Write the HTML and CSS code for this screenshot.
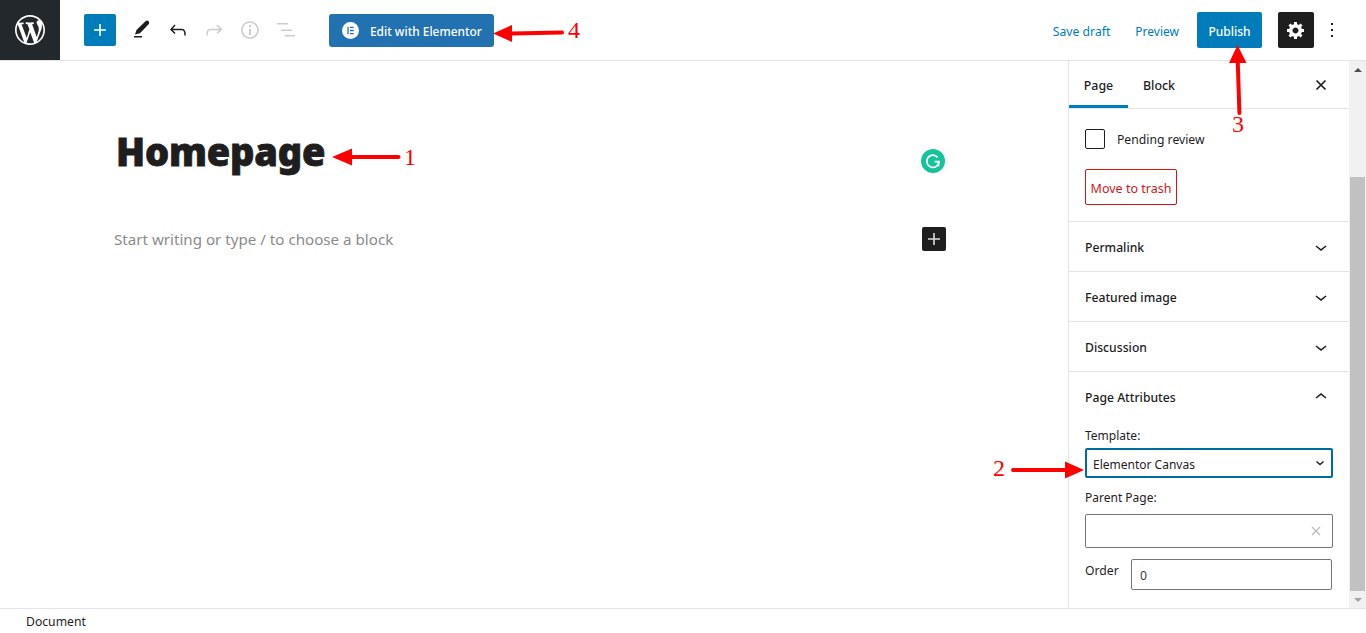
FILE: index.html
```html
<!DOCTYPE html>
<html lang="en">
<head>
<meta charset="utf-8">
<title>Edit Page</title>
<link rel="stylesheet" href="styles.css">
</head>
<body>
<div class="app">
  <header class="topbar">
    <div class="logo">
      <svg width="30" height="30" viewBox="0 0 20 20"><path fill="#fff" d="M20 10c0-5.51-4.49-10-10-10C4.48 0 0 4.49 0 10c0 5.52 4.48 10 10 10 5.51 0 10-4.48 10-10zM7.78 15.37L4.37 6.22c.55-.02 1.17-.08 1.17-.08.5-.06.44-1.13-.06-1.11 0 0-1.45.11-2.37.11-.18 0-.37 0-.58-.01C4.12 2.69 6.87 1.11 10 1.11c2.33 0 4.45.87 6.05 2.34-.68-.11-1.65.39-1.65 1.58 0 .74.45 1.36.9 2.1.35.61.55 1.36.55 2.46 0 1.49-1.4 5-1.4 5l-3.03-8.37c.54-.02.82-.17.82-.17.5-.05.44-1.25-.06-1.22 0 0-1.44.12-2.38.12-.87 0-2.33-.12-2.33-.12-.5-.03-.56 1.2-.06 1.22l.92.08 1.26 3.41zM17.41 10c.24-.64.74-1.87.43-4.25.7 1.29 1.05 2.71 1.05 4.25 0 3.29-1.73 6.24-4.4 7.78.97-2.59 1.94-5.2 2.92-7.78zM6.1 18.09C3.12 16.65 1.11 13.53 1.11 10c0-1.3.23-2.48.72-3.59C3.25 10.3 4.67 14.2 6.1 18.09zm4.03-6.63l2.58 6.98c-.86.29-1.76.45-2.71.45-.79 0-1.57-.11-2.29-.33.81-2.38 1.62-4.74 2.42-7.1z"/></svg>
    </div>
    <div class="tools">
      <div class="add-btn"><svg width="24" height="24" viewBox="0 0 24 24"><path fill="#fff" d="M18 11.2h-5.2V6h-1.6v5.2H6v1.6h5.2V18h1.6v-5.2H18z"/></svg></div>
      <div class="icon-btn"><svg width="24" height="24" viewBox="0 0 24 24"><path fill="#1e1e1e" d="M4 18h8v1.500H4zM5 16.500l1.500-4.500 9-8.800c.9-.9 2.300-.9 3.100 0 .8.900.8 2.200 0 3L10 15.200z"/></svg></div>
      <div class="icon-btn"><svg width="24" height="24" viewBox="0 0 24 24"><path fill="#1e1e1e" d="M18.3 11.7c-.6-.6-1.4-.9-2.3-.9H6.7l2.9-3.3-1.1-1-4.5 5L8.500 16l1-1-2.700-2.700H16c.5 0 .9.2 1.300.5 1 1 1 3.400 1 4.500v.3h1.500v-.2c0-1.500 0-4.300-1.500-5.700z"/></svg></div>
      <div class="icon-btn"><svg width="24" height="24" viewBox="0 0 24 24"><path fill="#ccc" d="M15.6 6.500l-1.100 1 2.900 3.300H8c-.9 0-1.700.3-2.300.9-1.400 1.500-1.400 4.200-1.400 5.600v.2h1.500v-.3c0-1.100 0-3.500 1-4.500.3-.3.7-.5 1.300-.5h9.200L14.500 15l1.100 1.100 4.600-4.600-4.600-5z"/></svg></div>
      <div class="icon-btn"><svg width="24" height="24" viewBox="0 0 24 24"><path fill="#ccc" d="M12 3.200c-4.800 0-8.800 3.900-8.800 8.800 0 4.800 3.900 8.800 8.800 8.800 4.800 0 8.800-3.900 8.800-8.800 0-4.800-4-8.800-8.800-8.800zm0 16c-4 0-7.200-3.300-7.200-7.200C4.800 8 8 4.800 12 4.800s7.200 3.300 7.200 7.200c0 4-3.200 7.200-7.200 7.200zM11 17h2v-6h-2v6zm0-8h2V7h-2v2z"/></svg></div>
      <div class="icon-btn"><svg width="24" height="24" viewBox="0 0 24 24"><path fill="#ccc" d="M3 5h11v1.500H3zM7 11.500h11V13H7zM11 17h10v1.500H11z"/></svg></div>
    </div>
    <div class="elementor-btn">
      <svg width="17" height="17" viewBox="0 0 17 17"><circle cx="8.500" cy="8.500" r="8.500" fill="#fff"/><path fill="#2271b1" d="M5.400 4.800h1.300v7.400H5.400zM8 4.800h3.700v1.300H8zM8 7.850h3.700v1.300H8zM8 10.900h3.700v1.300H8z"/></svg>
      <span>Edit with Elementor</span>
    </div>
    <div class="actions">
      <span class="link-btn save">Save draft</span>
      <span class="link-btn">Preview</span>
      <span class="publish">Publish</span>
      <div class="gear"><svg width="20" height="20" viewBox="0 0 20 20"><path fill="#fff" d="M18 12h-2.180c-.17.7-.44 1.350-.81 1.930l1.540 1.540-2.100 2.100-1.540-1.540c-.58.36-1.230.63-1.910.79V19H8v-2.180c-.68-.16-1.330-.43-1.910-.79l-1.540 1.540-2.120-2.120 1.540-1.540c-.36-.58-.63-1.230-.79-1.910H1V9.030h2.170c.16-.7.44-1.350.8-1.940L2.430 5.550l2.100-2.100 1.540 1.540c.58-.37 1.240-.64 1.930-.81V2h3v2.180c.68.16 1.330.43 1.910.79l1.540-1.540 2.120 2.120-1.540 1.540c.36.59.64 1.240.8 1.940H18V12zm-8.500 1.500c1.660 0 3-1.340 3-3s-1.340-3-3-3-3 1.340-3 3 1.340 3 3 3z"/></svg></div>
      <div class="more"><svg width="24" height="24" viewBox="0 0 24 24"><path fill="#1e1e1e" d="M13 19h-2v-2h2v2zm0-6h-2v-2h2v2zm0-6h-2V5h2v2z"/></svg></div>
    </div>
  </header>

  <div class="workspace">
    <main class="editor">
      <div class="title-row">
        <h1 class="title">Homepage</h1>
        <div class="grammarly"><svg width="24" height="24" viewBox="0 0 24 24"><circle cx="12" cy="12" r="12" fill="#15c39a"/><path fill="none" stroke="#fff" stroke-width="1.700" d="M16.600 8.400A6.100 6.100 0 1 0 18 12.600h-4.400"/><path fill="none" stroke="#fff" stroke-width="1.500" d="M17.500 13v4.500"/></svg></div>
      </div>
      <div class="block-row">
        <span class="placeholder">Start writing or type / to choose a block</span>
        <div class="block-add"><svg width="24" height="24" viewBox="0 0 24 24"><path fill="#ddd" d="M18 11.200h-5.200V6h-1.600v5.200H6v1.600h5.200V18h1.600v-5.200H18z"/></svg></div>
      </div>
    </main>

    <aside class="sidebar">
      <div class="tabs">
        <span class="tab active">Page</span>
        <span class="tab">Block</span>
        <svg class="close" width="24" height="24" viewBox="0 0 24 24"><path fill="none" stroke="#1e1e1e" stroke-width="1.700" d="M7.500 7.500l9 9M16.500 7.500l-9 9"/></svg>
      </div>
      <section class="status">
        <label class="check"><span class="box"></span><span>Pending review</span></label>
        <span class="trash">Move to trash</span>
      </section>
      <section class="panel"><span>Permalink</span><svg width="24" height="24" viewBox="0 0 24 24"><path fill="#1e1e1e" d="M17.500 11.600L12 16l-5.500-4.400.9-1.200L12 14l4.500-3.600 1 1.200z"/></svg></section>
      <section class="panel"><span>Featured image</span><svg width="24" height="24" viewBox="0 0 24 24"><path fill="#1e1e1e" d="M17.500 11.600L12 16l-5.500-4.400.9-1.200L12 14l4.500-3.600 1 1.200z"/></svg></section>
      <section class="panel"><span>Discussion</span><svg width="24" height="24" viewBox="0 0 24 24"><path fill="#1e1e1e" d="M17.500 11.600L12 16l-5.500-4.400.9-1.200L12 14l4.500-3.600 1 1.200z"/></svg></section>
      <section class="attrs">
        <div class="attrs-head"><span>Page Attributes</span><svg width="24" height="24" viewBox="0 0 24 24"><path fill="#1e1e1e" d="M6.500 12.400L12 8l5.500 4.400-.9 1.200L12 10l-4.500 3.600-1-1.200z"/></svg></div>
        <div class="field-label">Template:</div>
        <div class="select"><span>Elementor Canvas</span><svg width="12" height="12" viewBox="0 0 12 12"><path fill="none" stroke="#1e1e1e" stroke-width="1.500" d="M2.500 4.500L6 7.500l3.500-3"/></svg></div>
        <div class="field-label parent-label">Parent Page:</div>
        <div class="combo"><svg width="12" height="12" viewBox="0 0 12 12"><path fill="none" stroke="#bbb" stroke-width="1.300" d="M2 2l8 8M10 2l-8 8"/></svg></div>
        <div class="order-row"><span>Order</span><div class="order-input">0</div></div>
      </section>
    </aside>

    <div class="scrollbar">
      <div class="sb-arrow up"></div>
      <div class="sb-space"></div>
      <div class="sb-thumb"></div>
      <div class="sb-arrow down"></div>
    </div>
  </div>

  <footer class="footer">Document</footer>
</div>

<svg class="annotations" width="1366" height="633" viewBox="0 0 1366 633">
  <g fill="#f00" stroke="none">
    <path d="M332 157l20-8.500v6.500h46.500a2 2 0 0 1 0 4H352v6.500z"/>
    <path d="M1084 470l-19 8.500v-6.500h-52a2 2 0 0 1 0-4h52v-6.500z"/>
    <path d="M1237.500 45l-8.500 18h6.800l1.600 50a2 2 0 0 0 4 0l-1.600-50h6.700z"/>
    <path d="M493 33.500l19-8.500v6.500l50-1a2 2 0 0 1 0 4l-50 1v6.500z"/>
  </g>
  <g class="anno-num" fill="#f00">
    <text x="404" y="165">1</text>
    <text x="993" y="476">2</text>
    <text x="1232" y="132">3</text>
    <text x="568" y="38">4</text>
  </g>
</svg>
</body>
</html>
```

FILE: styles.css
```css
* { box-sizing: border-box; }
html, body { margin: 0; height: 100%; overflow: hidden; background: #fff; }
body { font-family: "Noto Sans", "Open Sans", sans-serif; font-size: 12.200px; color: #1e1e1e; position: relative; }
svg { display: block; flex: none; }

.app { display: flex; flex-direction: column; height: 633px; }

/* Top bar */
.topbar { height: 61px; flex: none; display: flex; align-items: center; border-bottom: 1px solid #e2e4e7; }
.logo { width: 60px; height: 60px; background: #23282d; display: flex; align-items: center; justify-content: center; }
.tools { display: flex; align-items: center; margin-left: 24px; }
.add-btn { width: 32px; height: 32px; background: #007cba; border-radius: 2px; display: flex; align-items: center; justify-content: center; margin-right: 8px; }
.icon-btn { width: 36px; height: 36px; display: flex; align-items: center; justify-content: center; }
.elementor-btn { margin-left: 25px; width: 165px; height: 33px; background: #2271b1; border-radius: 3px; color: #fff; font-weight: 500; display: flex; align-items: center; padding-left: 13px; gap: 11px; font-size: 11.900px; margin-top: 1px; }
.elementor-btn span { padding-top: 1px; }
.actions { margin-left: auto; display: flex; align-items: center; padding-right: 16px; }
.link-btn { color: #007cba; font-size: 12px; padding-top: 2px; margin-right: 18px; }
.link-btn.save { font-size: 12.200px; margin-right: 25px; }
.publish { width: 65px; height: 36px; background: #007cba; color: #fff; border-radius: 2px; font-weight: 500; font-size: 12px; display: flex; align-items: center; justify-content: center; padding-top: 2px; }
.gear { width: 36px; height: 36px; margin-left: 16px; background: #1e1e1e; border-radius: 2px; display: flex; align-items: center; justify-content: center; }
.more { width: 36px; height: 36px; display: flex; align-items: center; justify-content: center; }

/* Work area */
.workspace { flex: 1; min-height: 0; display: flex; }
.editor { flex: 1; min-width: 0; padding: 60px 0 0 114px; }
.title-row { width: 832px; display: flex; align-items: center; justify-content: space-between; height: 66px; }
.title { margin: 0 0 6px 2px; font-size: 38px; font-weight: 900; line-height: 60px; color: #1e1e1e; -webkit-text-stroke: .8px #1e1e1e; letter-spacing: -.2px; }
.grammarly { margin-right: 1px; margin-top: 13px; }
.block-row { width: 832px; margin-top: 40px; display: flex; align-items: center; justify-content: space-between; height: 24px; }
.placeholder { font-size: 15.150px; color: #8b8b8b; }
.block-add { width: 24px; height: 24px; background: #1e1e1e; border-radius: 2px; }

/* Sidebar */
.sidebar { width: 281px; flex: none; border-left: 1px solid #e2e4e7; }
.tabs { height: 48px; display: flex; align-items: stretch; border-bottom: 1px solid #e2e4e7; position: relative; padding-right: 16px; }
.tab { width: 59px; display: flex; align-items: center; justify-content: center; font-weight: 500; color: #1e1e1e; padding-top: 1px; font-size: 12.400px; }
.tab + .tab { width: 62px; }
.tab.active { box-shadow: inset 0 -3px 0 #007cba; }
.close { margin-left: auto; align-self: center; }
.status { padding: 20px 16px 16px; border-bottom: 1px solid #e2e4e7; height: 113px; }
.check { display: flex; align-items: center; gap: 12px; height: 20px; }
.box { width: 20px; height: 20px; border: 1px solid #1e1e1e; border-radius: 2px; }
.trash { margin-top: 20px; width: 92px; height: 36px; border: 1px solid #cc1818; border-radius: 2px; color: #cc1818; font-size: 12.500px; display: flex; align-items: center; justify-content: center; padding-top: 2px; }
.panel { height: 50px; padding: 0 16px; display: flex; align-items: center; justify-content: space-between; border-bottom: 1px solid #e2e4e7; font-weight: 500; }
.panel span { padding-top: 2px; }
.attrs { padding: 0 16px; }
.attrs-head { height: 50px; display: flex; align-items: center; justify-content: space-between; font-weight: 500; }
.field-label { line-height: 17px; margin-top: 5px; font-size: 12px; }
.select { margin-top: 4px; width: 248px; height: 30px; border: 2px solid #006ba1; border-radius: 2px; display: flex; align-items: center; justify-content: space-between; padding: 2px 5px 0 6px; font-size: 12px; }
.select svg { margin-top: -2px; }
.parent-label { margin-top: 11px; }
.combo { margin-top: 8px; width: 248px; height: 34px; border: 1px solid #757575; border-radius: 2px; display: flex; align-items: center; justify-content: flex-end; padding-right: 10px; }
.order-row { margin-top: 11px; display: flex; align-items: flex-start; }
.order-row span { width: 46px; line-height: 20px; padding-top: 2px; }
.order-input { width: 201px; height: 31px; border: 1px solid #757575; border-radius: 2px; padding: 2px 0 0 8px; display: flex; align-items: center; color: #32373c; }

/* Scrollbar */
.scrollbar { width: 17px; flex: none; background: #f1f1f1; display: flex; flex-direction: column; align-items: center; }
.sb-arrow { width: 17px; height: 17px; flex: none; display: flex; align-items: center; justify-content: center; }
.sb-arrow::before { content: ""; width: 0; height: 0; border-left: 4px solid transparent; border-right: 4px solid transparent; }
.sb-arrow.up::before { border-bottom: 4px solid #505050; }
.sb-arrow.down::before { border-top: 4px solid #a3a3a3; }
.sb-space { height: 99px; flex: none; }
.sb-thumb { width: 15px; flex: 1; background: #c1c1c1; }

/* Footer */
.footer { height: 25px; flex: none; border-top: 1px solid #e2e4e7; padding-left: 26px; display: flex; align-items: center; }

/* Red annotations drawn over the screenshot */
.annotations { position: absolute; left: 0; top: 0; pointer-events: none; }
.anno-num { font-family: "Liberation Serif", serif; font-size: 24px; }
```
